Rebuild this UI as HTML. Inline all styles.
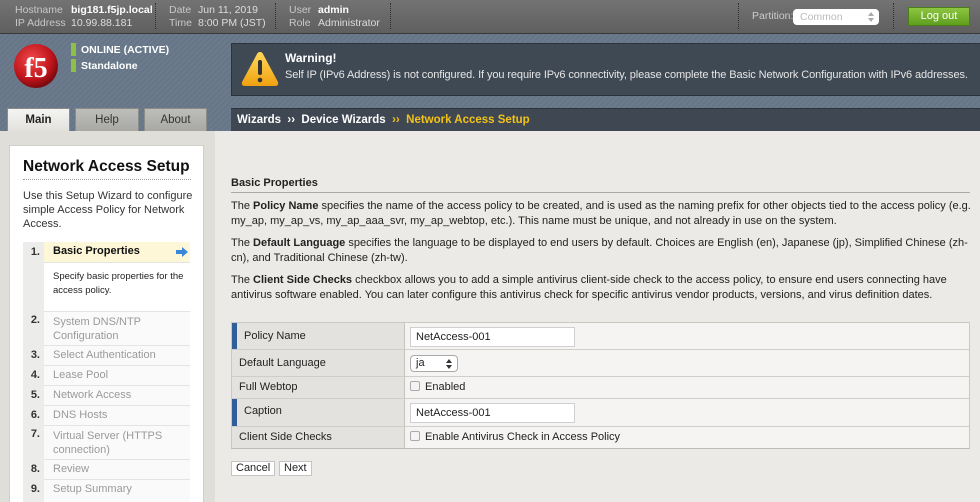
<!DOCTYPE html>
<html><head><meta charset="utf-8"><style>
*{margin:0;padding:0;box-sizing:border-box}
body{width:980px;height:502px;overflow:hidden;font-family:"Liberation Sans",Arial,sans-serif;font-size:11px;color:#222;background:#ebeae6;position:relative}
.a{position:absolute}
#top{left:0;top:0;width:980px;height:34px;background:linear-gradient(#737373,#5f5f5f);border-bottom:1px solid #3a3a3a;color:#ddd;font-size:10.5px}
#top .l{color:#c8c8c8}
#top b{color:#fff;font-weight:normal}
.dots{border-left:1px dotted #2e2e2e;height:26px;top:3px}
#hdr{left:0;top:34px;width:980px;height:97px;background:repeating-linear-gradient(135deg,#6b7b8c 0 2px,#667688 2px 4px)}
#warn{left:231px;top:43px;width:749px;height:53px;background:#3f4954;border:1px solid #2c333b;border-right:none;color:#e6e6e6}
#crumb{left:231px;top:108px;width:749px;height:23px;background:#3f4852;border-top:1px solid #2c333b;color:#fff;font-weight:bold;font-size:11.5px;line-height:22px;padding-left:6px}
.tab{top:108px;height:23px;background:linear-gradient(#bdbdb9,#a8a8a4);text-align:center;line-height:23px;font-size:11.5px;color:#333;border:1px solid #8b8b88;border-bottom:none}
#lbg{left:0;top:131px;width:215px;height:371px;background:#dfded9}
#lp{left:9px;top:145px;width:195px;height:357px;background:#fff;border:1px solid #d0cfca;border-bottom:none}
.st{left:23px;width:167px;font-size:11px}
.st .n{position:absolute;left:0;top:0;bottom:0;width:21px;background:#ececea;font-weight:bold;text-align:right;padding-right:4px;color:#333}
.st .t{position:absolute;left:21px;right:0;top:0;bottom:0;padding-left:9px;color:#9a9a9a;background:#fafafa;border-top:1px solid #e4e4e4;line-height:14px}
p{line-height:14.5px;margin-bottom:8px}
#tbl{left:231px;top:322px;width:739px;height:127px;border:1px solid #c9c8c3;border-bottom:2px solid #bcbcb8}
.row{position:absolute;left:0;width:737px;border-bottom:1px solid #cfcec9}
.row .k{position:absolute;left:0;top:0;bottom:0;width:173px;background:#e3e2de;border-right:1px solid #c5c4bf;padding-left:7px}
.row .v{position:absolute;left:173px;right:0;top:0;bottom:0;background:#f5f4f2}
.req{border-left:5px solid #2f5f96}
.inp{position:absolute;left:5px;width:165px;height:20px;background:#fff;border:1px solid #cfcfcf;padding-left:5px;line-height:18px}
.cb{display:inline-block;width:10px;height:10px;border:1px solid #aaa;border-radius:2px;background:#f4f4f4;vertical-align:-1px;margin-right:5px}
.btn{top:461px;height:15px;background:#fff;border:1px solid #c4c4c4;line-height:13px;padding:0 4px;font-size:11px}
</style></head><body>
<div id="top" class="a">
 <div class="a" style="left:15px;top:4px;line-height:13px"><span class="l">Hostname</span><br><span class="l">IP Address</span></div>
 <div class="a" style="left:71px;top:4px;line-height:13px"><b style="font-weight:bold">big181.f5jp.local</b><br>10.99.88.181</div>
 <div class="a dots" style="left:155px"></div>
 <div class="a" style="left:169px;top:4px;line-height:13px"><span class="l">Date</span><br><span class="l">Time</span></div>
 <div class="a" style="left:198px;top:4px;line-height:13px">Jun 11, 2019<br>8:00 PM (JST)</div>
 <div class="a dots" style="left:275px"></div>
 <div class="a" style="left:289px;top:4px;line-height:13px"><span class="l">User</span><br><span class="l">Role</span></div>
 <div class="a" style="left:318px;top:4px;line-height:13px"><b style="font-weight:bold">admin</b><br>Administrator</div>
 <div class="a dots" style="left:390px"></div>
 <div class="a dots" style="left:738px"></div>
 <div class="a" style="left:752px;top:10px;color:#ccc">Partition:</div>
 <div class="a" style="left:793px;top:9px;width:86px;height:16px;background:#fff;border-radius:4px;color:#bbb;padding-left:7px;line-height:16px">Common<svg class="a" style="right:5px;top:3px" width="6" height="10"><path d="M0 4L3 0L6 4Z M0 6L3 10L6 6Z" fill="#aaa"/></svg></div>
 <div class="a dots" style="left:893px"></div>
 <div class="a" style="left:908px;top:7px;width:62px;height:19px;background:linear-gradient(#8cc640,#5f9e1e);border:1px solid #4b7d18;color:#fff;text-align:center;line-height:17px;font-size:11px">Log out</div>
</div>
<div id="hdr" class="a">
 <svg class="a" style="left:12px;top:8px" width="48" height="48"><defs><radialGradient id="g" cx="0.4" cy="0.35" r="0.65"><stop offset="0" stop-color="#f04a4a"/><stop offset="0.7" stop-color="#c0141c"/><stop offset="1" stop-color="#7a0a0e"/></radialGradient></defs><circle cx="24" cy="24" r="22" fill="url(#g)"/><text x="24" y="35" text-anchor="middle" font-family="Liberation Serif,serif" font-size="28" font-weight="bold" fill="#fff">f5</text></svg>
 <div class="a" style="left:71px;top:9px;width:5px;height:13px;background:#8fc046"></div>
 <div class="a" style="left:71px;top:25px;width:5px;height:13px;background:#8fc046"></div>
 <div class="a" style="left:81px;top:10px;color:#fff;font-weight:bold;font-size:10.5px">ONLINE (ACTIVE)</div>
 <div class="a" style="left:81px;top:26px;color:#fff;font-weight:bold;font-size:10.5px">Standalone</div>
</div>
<div id="warn" class="a">
 <svg class="a" style="left:8px;top:6px" width="40" height="38"><defs><linearGradient id="w" x1="0" y1="0" x2="0" y2="1"><stop offset="0" stop-color="#ffd95a"/><stop offset="1" stop-color="#f0a010"/></linearGradient></defs><path d="M20 2Q22 2 23 4L38 32Q39 36 35 36H5Q1 36 2 32L17 4Q18 2 20 2Z" fill="url(#w)"/><rect x="18" y="10" width="4" height="15" rx="2" fill="#333"/><circle cx="20" cy="30" r="2.3" fill="#333"/></svg>
 <div class="a" style="left:53px;top:7px;font-weight:bold;font-size:12px;color:#fff">Warning!</div>
 <div class="a" style="left:53px;top:25px;font-size:11px;white-space:nowrap;letter-spacing:-0.1px">Self IP (IPv6 Address) is not configured. If you require IPv6 connectivity, please complete the Basic Network Configuration with IPv6 addresses.</div>
</div>
<div class="a tab" style="left:7px;width:63px;background:linear-gradient(#f4f4f2,#e2e1dd);font-weight:bold;color:#222">Main</div>
<div class="a tab" style="left:75px;width:64px">Help</div>
<div class="a tab" style="left:144px;width:63px">About</div>
<div id="crumb" class="a">Wizards &nbsp;›› &nbsp;Device Wizards &nbsp;<span style="color:#f2c21b">›› &nbsp;Network Access Setup</span></div>
<div id="lbg" class="a"></div>
<div id="lp" class="a"></div>
<div class="a" style="left:23px;top:158px;font-size:15.5px;font-weight:bold;color:#111">Network Access Setup</div>
<div class="a" style="left:23px;top:179px;width:168px;border-top:1px dotted #999"></div>
<div class="a" style="left:23px;top:189px;width:175px;font-size:11px;line-height:14px;color:#333">Use this Setup Wizard to configure simple Access Policy for Network Access.</div>
<div class="a st" style="top:242px;height:20px"><div class="n" style="line-height:20px">1.</div><div class="t" style="background:#fdf7d8;color:#111;font-weight:bold;line-height:19px;border:none">Basic Properties<svg class="a" style="right:2px;top:5px" width="12" height="10"><path d="M0 3H6V0L12 5L6 10V7H0Z" fill="#3a86d8"/></svg></div></div>
<div class="a st" style="top:262px;height:49px"><div class="n"></div><div class="t" style="background:#fff;color:#222;font-size:9.5px;padding-top:7px;line-height:14px">Specify basic properties for the access policy.</div></div>
<div class="a st" style="top:311px;height:34px"><div class="n" style="padding-top:3px">2.</div><div class="t" style="padding-top:3px">System DNS/NTP Configuration</div></div>
<div class="a st" style="top:345px;height:20px"><div class="n" style="line-height:20px">3.</div><div class="t" style="line-height:19px">Select Authentication</div></div>
<div class="a st" style="top:365px;height:20px"><div class="n" style="line-height:20px">4.</div><div class="t" style="line-height:19px">Lease Pool</div></div>
<div class="a st" style="top:385px;height:20px"><div class="n" style="line-height:20px">5.</div><div class="t" style="line-height:19px">Network Access</div></div>
<div class="a st" style="top:405px;height:20px"><div class="n" style="line-height:20px">6.</div><div class="t" style="line-height:19px">DNS Hosts</div></div>
<div class="a st" style="top:425px;height:34px"><div class="n" style="padding-top:3px">7.</div><div class="t" style="padding-top:3px">Virtual Server (HTTPS connection)</div></div>
<div class="a st" style="top:459px;height:20px"><div class="n" style="line-height:20px">8.</div><div class="t" style="line-height:19px">Review</div></div>
<div class="a st" style="top:479px;height:23px"><div class="n" style="line-height:20px">9.</div><div class="t" style="line-height:19px">Setup Summary</div></div>

<div class="a" style="left:231px;top:177px;font-weight:bold;font-size:11px">Basic Properties</div>
<div class="a" style="left:231px;top:192px;width:739px;border-top:1px solid #aaa"></div>
<div class="a" style="left:231px;top:199px;width:745px">
<p>The <b>Policy Name</b> specifies the name of the access policy to be created, and is used as the naming prefix for other objects tied to the access policy (e.g. my_ap, my_ap_vs, my_ap_aaa_svr, my_ap_webtop, etc.). This name must be unique, and not already in use on the system.</p>
<p>The <b>Default Language</b> specifies the language to be displayed to end users by default. Choices are English (en), Japanese (jp), Simplified Chinese (zh-cn), and Traditional Chinese (zh-tw).</p>
<p>The <b>Client Side Checks</b> checkbox allows you to add a simple antivirus client-side check to the access policy, to ensure end users connecting have antivirus software enabled. You can later configure this antivirus check for specific antivirus vendor products, versions, and virus definition dates.</p>
</div>
<div id="tbl" class="a">
 <div class="row" style="top:0;height:27px"><div class="k req" style="line-height:26px;padding-left:7px">Policy Name</div><div class="v"><div class="inp" style="top:4px">NetAccess-001</div></div></div>
 <div class="row" style="top:27px;height:27px"><div class="k" style="line-height:26px">Default Language</div><div class="v"><div class="a" style="left:5px;top:5px;width:48px;height:17px;border:1px solid #aaa;border-radius:4px;background:#fff;padding-left:5px;line-height:15px">ja<svg class="a" style="right:5px;top:3px" width="6" height="10"><path d="M0 4L3 0L6 4Z M0 6L3 10L6 6Z" fill="#333"/></svg></div></div></div>
 <div class="row" style="top:54px;height:22px"><div class="k" style="line-height:21px">Full Webtop</div><div class="v" style="line-height:21px;padding-left:5px"><span class="cb"></span>Enabled</div></div>
 <div class="row" style="top:76px;height:28px"><div class="k req" style="line-height:25px">Caption</div><div class="v"><div class="inp" style="top:4px">NetAccess-001</div></div></div>
 <div class="row" style="top:104px;height:21px;border-bottom:none"><div class="k" style="line-height:21px">Client Side Checks</div><div class="v" style="line-height:21px;padding-left:5px"><span class="cb"></span>Enable Antivirus Check in Access Policy</div></div>
</div>
<div class="a btn" style="left:231px">Cancel</div>
<div class="a btn" style="left:279px">Next</div>
</body></html>
